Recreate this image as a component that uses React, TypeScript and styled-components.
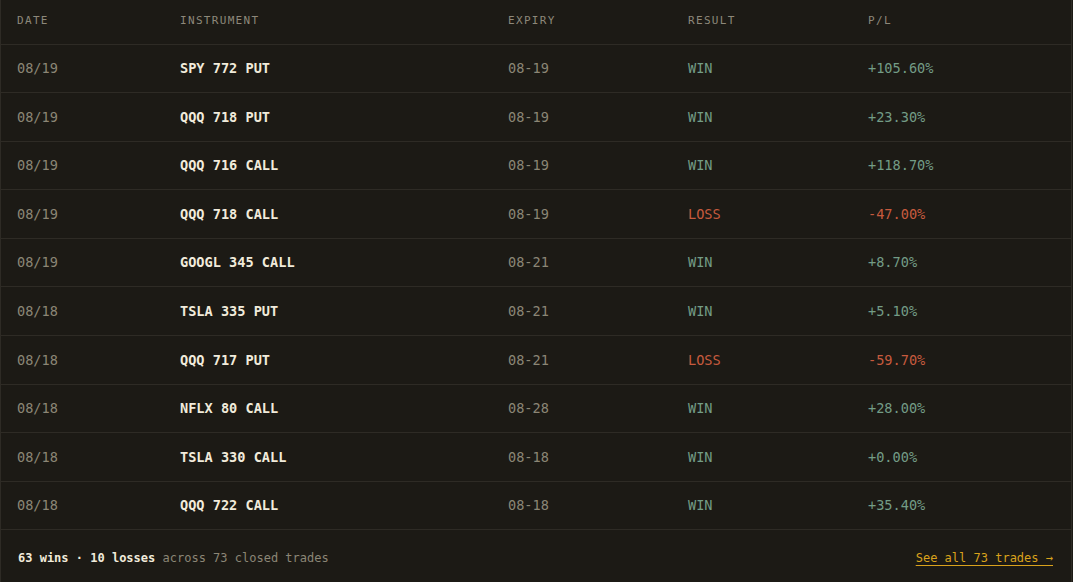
import React from 'react';
import styled, { createGlobalStyle } from 'styled-components';

const GlobalStyle = createGlobalStyle`
  html, body {
    margin: 0;
    padding: 0;
    background-color: #1c1a15;
  }
  body {
    font-family: "DejaVu Sans Mono", "Liberation Mono", monospace;
  }
`;

const Panel = styled.div`
  width: 1072px;
  box-sizing: border-box;
  border: 1px solid #2e2b25;
  border-top: none;
  background-color: #1c1a15;
`;

const Row = styled.div`
  display: grid;
  grid-template-columns: 163px 328px 180px 180px 1fr;
  border-bottom: 1px solid #2e2b25;
`;

const HeadCell = styled.div`
  padding: 13px 16px 14px;
  font-size: 11px;
  line-height: 1.5;
  letter-spacing: 0.12em;
  text-transform: uppercase;
  color: #8d887a;
`;

const Cell = styled.div<{ $tone?: 'muted' | 'strong' | 'win' | 'loss' }>`
  padding: 13.6px 16px;
  font-size: 13.6px;
  line-height: 1.5;
  white-space: nowrap;
  font-weight: ${p => (p.$tone === 'strong' ? 700 : 400)};
  color: ${p => {
    switch (p.$tone) {
      case 'strong':
        return '#f1ebdb';
      case 'win':
        return '#739c86';
      case 'loss':
        return '#c65a3e';
      default:
        return '#8b8676';
    }
  }};
`;

const Footer = styled.div`
  display: flex;
  justify-content: space-between;
  align-items: center;
  padding: 19px 18px 18px 17px;
  font-size: 12px;
  line-height: 1.5;
`;

const Summary = styled.div`
  color: #8b8676;

  strong {
    color: #f1ebdb;
    font-weight: 700;
  }
`;

const AllLink = styled.a`
  color: #d9a21c;
  text-decoration: underline;
  text-underline-offset: 3px;
  cursor: pointer;
`;

type Trade = {
  date: string;
  instrument: string;
  expiry: string;
  win: boolean;
  pl: string;
};

const trades: Trade[] = [
  { date: '08/19', instrument: 'SPY 772 PUT', expiry: '08-19', win: true, pl: '+105.60%' },
  { date: '08/19', instrument: 'QQQ 718 PUT', expiry: '08-19', win: true, pl: '+23.30%' },
  { date: '08/19', instrument: 'QQQ 716 CALL', expiry: '08-19', win: true, pl: '+118.70%' },
  { date: '08/19', instrument: 'QQQ 718 CALL', expiry: '08-19', win: false, pl: '-47.00%' },
  { date: '08/19', instrument: 'GOOGL 345 CALL', expiry: '08-21', win: true, pl: '+8.70%' },
  { date: '08/18', instrument: 'TSLA 335 PUT', expiry: '08-21', win: true, pl: '+5.10%' },
  { date: '08/18', instrument: 'QQQ 717 PUT', expiry: '08-21', win: false, pl: '-59.70%' },
  { date: '08/18', instrument: 'NFLX 80 CALL', expiry: '08-28', win: true, pl: '+28.00%' },
  { date: '08/18', instrument: 'TSLA 330 CALL', expiry: '08-18', win: true, pl: '+0.00%' },
  { date: '08/18', instrument: 'QQQ 722 CALL', expiry: '08-18', win: true, pl: '+35.40%' },
];

export default function App() {
  return (
    <>
      <GlobalStyle />
      <Panel>
        <Row>
          <HeadCell>Date</HeadCell>
          <HeadCell>Instrument</HeadCell>
          <HeadCell>Expiry</HeadCell>
          <HeadCell>Result</HeadCell>
          <HeadCell>P/L</HeadCell>
        </Row>
        {trades.map((t, i) => (
          <Row key={i}>
            <Cell>{t.date}</Cell>
            <Cell $tone="strong">{t.instrument}</Cell>
            <Cell>{t.expiry}</Cell>
            <Cell $tone={t.win ? 'win' : 'loss'}>{t.win ? 'WIN' : 'LOSS'}</Cell>
            <Cell $tone={t.win ? 'win' : 'loss'}>{t.pl}</Cell>
          </Row>
        ))}
        <Footer>
          <Summary>
            <strong>63 wins · 10 losses</strong> across 73 closed trades
          </Summary>
          <AllLink>See all 73 trades →</AllLink>
        </Footer>
      </Panel>
    </>
  );
}
